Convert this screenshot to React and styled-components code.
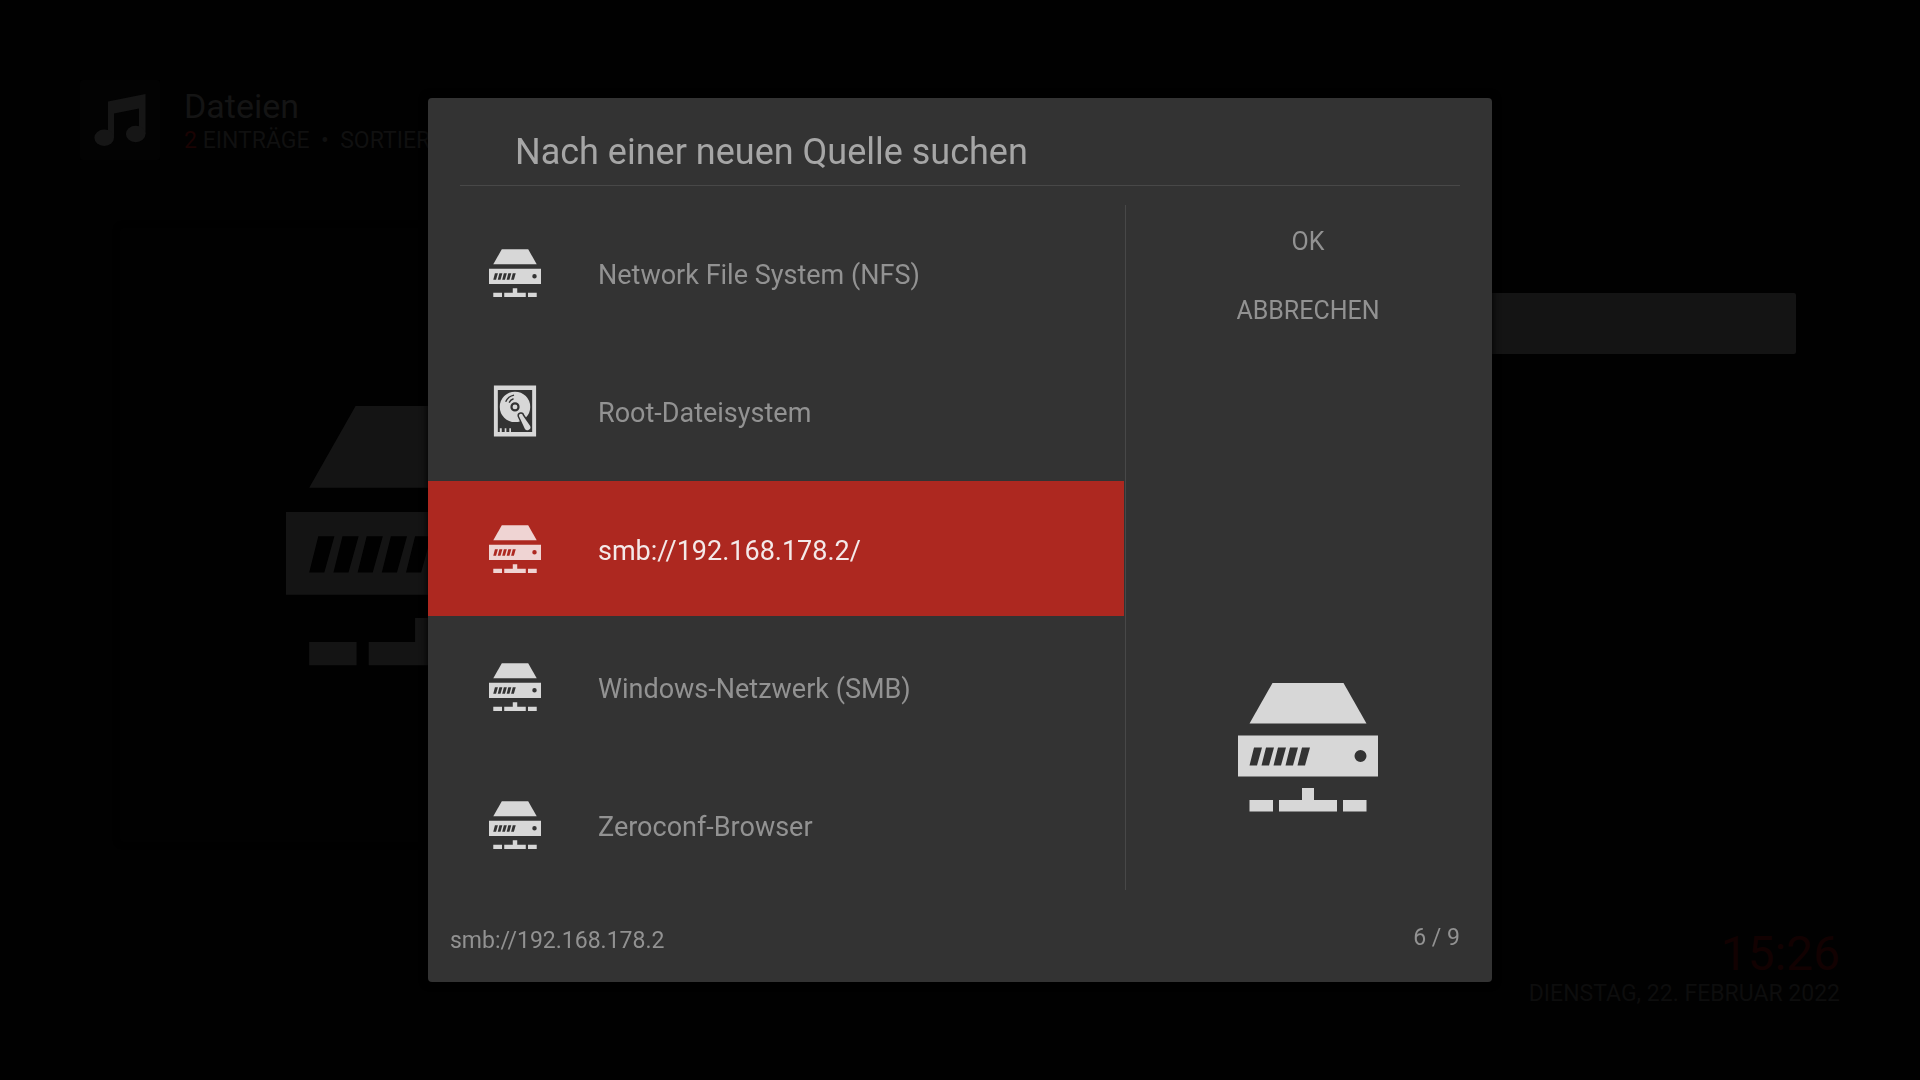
import React, { useState } from 'react';
import styled, { createGlobalStyle } from 'styled-components';

const sources = [
  { name: 'Network File System (NFS)', icon: 'server' },
  { name: 'Root-Dateisystem', icon: 'disk' },
  { name: 'smb://192.168.178.2/', icon: 'server' },
  { name: 'Windows-Netzwerk (SMB)', icon: 'server' },
  { name: 'Zeroconf-Browser', icon: 'server' },
];

function ServerIcon() {
  return (
    <svg viewBox="0 0 140 140" fill="currentColor" aria-hidden="true">
      <path d="M34.5 6h71L128.5 46.5h-117z" />
      <path
        fillRule="evenodd"
        d="M0 58.500h140v41H0z
          M16 70.500l-4.5 18h7.5l5-18z
          M28 70.500l-4.5 18h7.5l5-18z
          M40 70.500l-4.5 18h7.5l5-18z
          M52 70.500l-4.5 18h7.5l5-18z
          M64 70.500l-4.5 18h7.5l5-18z
          M116.5 79a6 6 0 1 0 12 0a6 6 0 1 0-12 0z"
      />
      <path d="M11.500 123h23.500v11.500h-23.500zM105 123h23.500v11.500h-23.500zM41 123h23v-12h12v12h23v11.500h-58z" />
    </svg>
  );
}

function DiskIcon() {
  return (
    <svg viewBox="0 0 53 53" fill="currentColor" aria-hidden="true">
      <path
        fillRule="evenodd"
        d="M5 .5h43v52H5zM9 5v43h2v-4h2v4h3v-4h1.700v4h3v-4h1.700v4H44V5z"
      />
      <path
        fillRule="evenodd"
        d="M26.500 6.800a15.500 15.500 0 1 0 0 31a15.500 15.500 0 1 0 0-31z
          M26.500 17.600a4.700 4.700 0 1 1 0 9.400a4.700 4.700 0 1 1 0-9.400z"
      />
      <circle cx="26.500" cy="22.300" r="2.500" />
      <path
        d="M17 17q2.500-5.500 8.500-6.700M20.500 18q1.500-3 4.500-4"
        fill="none"
        stroke="#333"
        strokeWidth="1.400"
      />
      <path
        d="M30.500 31.500a2 2 0 0 1 4-.5l7.300 10.500a3 3 0 0 1-5.300 3z"
        stroke="#333"
        strokeWidth="3"
        strokeLinejoin="round"
        paintOrder="stroke"
      />
    </svg>
  );
}

function MusicIcon() {
  return (
    <svg viewBox="0 0 52 52" fill="currentColor" aria-hidden="true">
      <path d="M14 7.500L51.500 0V40H45V14.500L20 19.500V44H14z" />
      <ellipse cx="10.200" cy="43.800" rx="9.800" ry="8.200" />
      <ellipse cx="41.700" cy="40" rx="9.800" ry="8.200" />
    </svg>
  );
}

export default function App() {
  const [selected, setSelected] = useState(2);

  return (
    <>
      <GlobalStyle />
      <Page>
        <PageHeader>
          <MusicBox>
            <MusicIcon />
          </MusicBox>
          <div>
            <PageTitle>Dateien</PageTitle>
            <PageInfo>
              <em>2</em> EINTRÄGE &nbsp;•&nbsp; SORTIERT
            </PageInfo>
          </div>
        </PageHeader>
        <PageMain>
          <Preview>
            <ServerIcon />
          </Preview>
          <FocusBar />
        </PageMain>
        <PageFooter>
          <Clock>15:26</Clock>
          <Today>DIENSTAG, 22. FEBRUAR 2022</Today>
        </PageFooter>
      </Page>

      <Overlay>
        <Dialog role="dialog" aria-labelledby="dialog-title">
          <DialogTitle id="dialog-title">Nach einer neuen Quelle suchen</DialogTitle>
          <DialogBody>
            <SourceList>
              {sources.map((source, index) => (
                <li key={source.name}>
                  <SourceButton
                    type="button"
                    $selected={selected === index}
                    onClick={() => setSelected(index)}
                  >
                    <SourceIcon $selected={selected === index}>
                      {source.icon === 'disk' ? <DiskIcon /> : <ServerIcon />}
                    </SourceIcon>
                    <SourceName>{source.name}</SourceName>
                  </SourceButton>
                </li>
              ))}
            </SourceList>
            <SidePanel>
              <SideButton type="button">OK</SideButton>
              <SideButton type="button">ABBRECHEN</SideButton>
              <SideIcon>
                <ServerIcon />
              </SideIcon>
            </SidePanel>
          </DialogBody>
          <DialogFooter>
            <CurrentPath>smb://192.168.178.2</CurrentPath>
            <span>6 / 9</span>
          </DialogFooter>
        </Dialog>
      </Overlay>
    </>
  );
}

const GlobalStyle = createGlobalStyle`
  * {
    box-sizing: border-box;
  }

  body {
    margin: 0;
    background: #010101;
    font-family: Roboto, 'Liberation Sans', sans-serif;
  }

  svg {
    display: block;
    width: 100%;
    height: 100%;
  }
`;

const Page = styled.div`
  display: flex;
  flex-direction: column;
  min-height: 100vh;
  padding: 80px 80px 72px;
  color: #101010;
`;

const PageHeader = styled.header`
  display: flex;
  gap: 24px;
`;

const MusicBox = styled.div`
  width: 80px;
  height: 80px;
  padding: 14px;
  border-radius: 3px;
  background: #030303;
  color: #161616;
`;

const PageTitle = styled.h1`
  margin: 4px 0 0;
  font-size: 34px;
  line-height: 44px;
  font-weight: 400;
  color: #141414;
`;

const PageInfo = styled.p`
  margin: 0;
  font-size: 23px;
  line-height: 26px;
  white-space: nowrap;

  em {
    font-style: normal;
    color: #1a0303;
  }
`;

const PageMain = styled.main`
  display: flex;
  gap: 40px;
  margin-top: 68px;
  padding: 0 44px 0 40px;
`;

const Preview = styled.div`
  flex: none;
  width: 32vw;
  aspect-ratio: 1;
  padding: 166px;
  border-radius: 3px;
  background: #010101;
  box-shadow: 0 0 6px #000;
  color: #141414;
`;

const FocusBar = styled.div`
  flex: 1;
  height: 61px;
  margin-top: 65px;
  border-radius: 2px;
  background: #141414;
`;

const PageFooter = styled.footer`
  margin-top: auto;
  text-align: right;
`;

const Clock = styled.div`
  font-size: 48px;
  line-height: 52px;
  color: #120101;
`;

const Today = styled.div`
  font-size: 23px;
  line-height: 28px;
  color: #0d0d0d;
`;

const Overlay = styled.div`
  position: fixed;
  inset: 0;
  display: flex;
  align-items: center;
  justify-content: center;
`;

const Dialog = styled.section`
  width: min(1064px, 94vw);
  border-radius: 4px;
  background: #333;
  box-shadow: 0 0 8px #000;
  color: #929292;
`;

const DialogTitle = styled.h2`
  margin: 0 32px;
  padding: 30px 0 9px 55px;
  border-bottom: 1px solid #484848;
  font-size: 36px;
  line-height: 48px;
  font-weight: 400;
  color: #a6a6a6;
`;

const DialogBody = styled.div`
  display: flex;
  margin-top: 19px;
`;

const SourceList = styled.ul`
  flex: 1;
  display: flex;
  flex-direction: column;
  gap: 3px;
  margin: 0 1px 0 0;
  padding: 0;
  list-style: none;
`;

const SourceButton = styled.button`
  display: flex;
  align-items: center;
  gap: 57px;
  width: 100%;
  height: 135px;
  padding: 0 24px 0 61px;
  border: none;
  background: ${(props) => (props.$selected ? '#ad2820' : 'transparent')};
  color: ${(props) => (props.$selected ? '#f4e9e9' : '#929292')};
  font: inherit;
  font-size: 27px;
  text-align: left;
  cursor: pointer;
`;

const SourceName = styled.span`
  padding-top: 5px;
`;

const SourceIcon = styled.span`
  flex: none;
  width: 52px;
  height: 52px;
  color: ${(props) => (props.$selected ? '#efd4d3' : '#d7d7d7')};
`;

const SidePanel = styled.div`
  display: flex;
  flex-direction: column;
  align-items: center;
  width: 367px;
  margin-bottom: 2px;
  padding: 0 2px 73px 0;
  border-left: 1px solid #484848;
`;

const SideButton = styled.button`
  width: 100%;
  height: 69px;
  padding: 3px 0 0;
  border: none;
  background: transparent;
  color: #929292;
  font: inherit;
  font-size: 25px;
  cursor: pointer;
`;

const SideIcon = styled.div`
  width: 140px;
  height: 140px;
  margin-top: auto;
  color: #d7d7d7;
`;

const DialogFooter = styled.footer`
  display: flex;
  justify-content: space-between;
  padding: 32px 32px 27px 22px;
  font-size: 23px;
  line-height: 28px;
`;

const CurrentPath = styled.span`
  padding-top: 3px;
`;
